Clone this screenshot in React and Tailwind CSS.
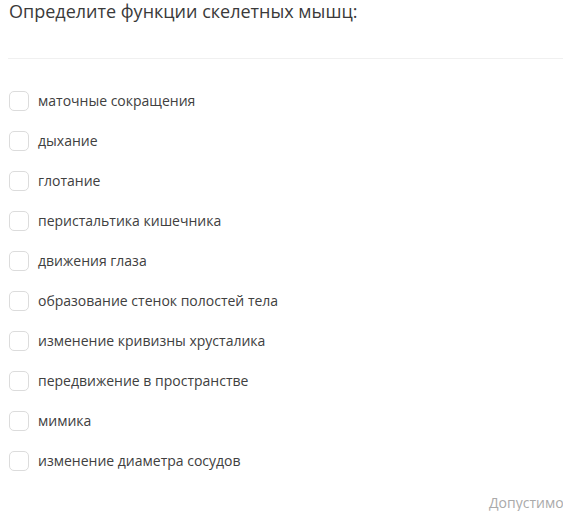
import React from "react";

const items = [
  "маточные сокращения",
  "дыхание",
  "глотание",
  "перистальтика кишечника",
  "движения глаза",
  "образование стенок полостей тела",
  "изменение кривизны хрусталика",
  "передвижение в пространстве",
  "мимика",
  "изменение диаметра сосудов",
];

export default function App() {
  return (
    <div
      className="w-[563px] h-[511px] overflow-hidden bg-white text-[#333]"
      style={{ fontFamily: '"Open Sans", "Noto Sans", sans-serif' }}
    >
      <div className="pl-[9px] h-[58px]">
        <h1 className="text-[18px] leading-[20px] pt-[1px] text-[#3a3a3a] font-normal">
          Определите функции скелетных мышц:
        </h1>
      </div>
      <div className="ml-[8px] h-px bg-[#f0f0f0]" />
      <div className="flex flex-col pt-[22px] pl-[9px]">
        {items.map((t) => (
          <label key={t} className="flex items-center h-[40px] gap-[9px]">
            <span className="w-[20px] h-[20px] rounded-[5px] border border-[#dcdcdc] bg-white shrink-0" />
            <span className="text-[14px] leading-[20px] text-[#404040]">{t}</span>
          </label>
        ))}
      </div>
      <div className="flex pl-[489px] pt-[12px] whitespace-nowrap">
        <span className="text-[14px] leading-[20px] text-[#aaaaaa]">Допустимо ошибок: 0</span>
      </div>
    </div>
  );
}
